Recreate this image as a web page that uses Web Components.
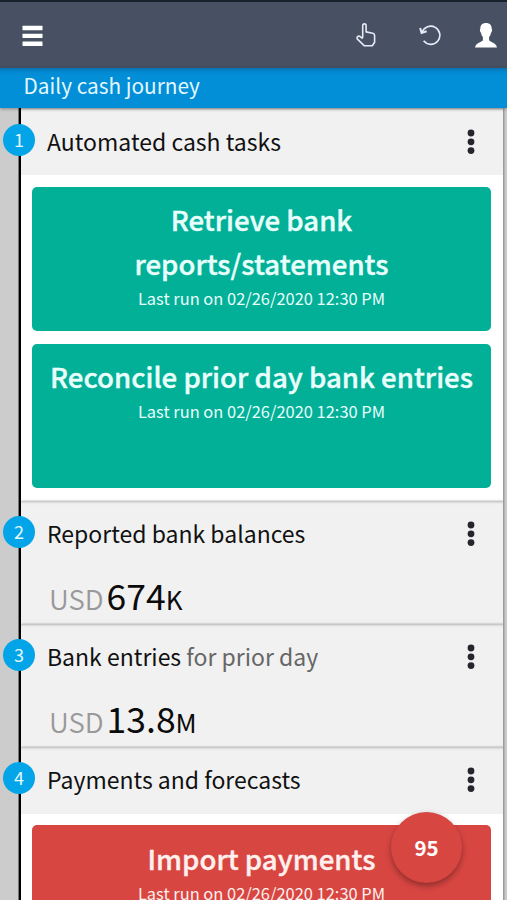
<!DOCTYPE html>
<html lang="en">
<head>
<meta charset="utf-8">
<title>Daily cash journey</title>
<style>
    html, body {
        margin: 0;
        height: 900px;
        overflow: hidden;
    }

    body {
        font-family: "Noto Sans CJK SC", "Noto Sans", sans-serif;
        background-color: #ccc;
    }
</style>
</head>
<body>
<cash-app>
    <cash-toolbar slot="toolbar"></cash-toolbar>
    <cash-title slot="title">Daily cash journey</cash-title>

    <cash-step number="1" body="tasks">
        <span slot="heading">Automated cash tasks</span>
        <cash-task color="green">
            <span>Retrieve bank reports/statements</span>
            <span slot="info">Last run on 02/26/2020 12:30 PM</span>
        </cash-task>
        <cash-task color="green">
            <span>Reconcile prior day bank entries</span>
            <span slot="info">Last run on 02/26/2020 12:30 PM</span>
        </cash-task>
    </cash-step>

    <cash-step number="2">
        <span slot="heading">Reported bank balances</span>
        <cash-amount currency="USD" unit="K">674</cash-amount>
    </cash-step>

    <cash-step number="3">
        <span slot="heading">Bank entries</span>
        <span slot="note">for prior day</span>
        <cash-amount currency="USD" unit="M">13.8</cash-amount>
    </cash-step>

    <cash-step number="4" body="tasks">
        <span slot="heading">Payments and forecasts</span>
        <cash-task color="red">
            <span>Import payments</span>
            <span slot="info">Last run on 02/26/2020 12:30 PM</span>
        </cash-task>
    </cash-step>

    <cash-fab slot="fab">95</cash-fab>
</cash-app>

<script>
class CashElement extends HTMLElement {
    constructor() {
        super()
        this.root = this.attachShadow({ mode: "open" })
    }

    connectedCallback() {
        this.root.innerHTML = this.html()
    }
}

class CashApp extends CashElement {
    html() {
        return /*html*/`
            <style>
                :host {
                    display: flex;
                    flex-direction: column;
                    position: relative;
                    height: 900px;
                    overflow: hidden;
                }

                main {
                    flex: 1;
                    min-height: 0;
                    box-sizing: border-box;
                    padding-right: 4px;
                    background: linear-gradient(to right, #ccc 18px, #777 18px, #777 19px, #000 19px, #000 21px, #ccc 21px);
                }
            </style>
            <slot name="toolbar"></slot>
            <slot name="title"></slot>
            <main><slot></slot></main>
            <slot name="fab"></slot>
        `
    }
}

class CashToolbar extends CashElement {
    html() {
        return /*html*/`
            <style>
                :host {
                    display: flex;
                    align-items: center;
                    flex: none;
                    box-sizing: border-box;
                    height: 68px;
                    padding: 0 10.5px 0 22px;
                    border-top: 2px solid #18212b;
                    background-color: #475163;
                    color: #fff;
                }

                svg {
                    display: block;
                }

                .menu {
                    margin: 2px auto 0 0;
                }

                .undo {
                    margin: 0 33.5px 0 42.5px;
                }
            </style>
            <svg class="menu" width="22" height="22" viewBox="0 0 22 22" fill="currentColor">
                <rect x=".5" y=".8" width="20" height="4.4" rx=".5"/>
                <rect x=".5" y="8.7" width="20" height="4.4" rx=".5"/>
                <rect x=".5" y="16.6" width="20" height="4.4" rx=".5"/>
            </svg>
            <svg width="22" height="26" viewBox="0 0 22 26" fill="none" stroke="#e6eaf6" stroke-width="1.6" stroke-linejoin="round">
                <path d="M7.7 15.7V3.6Q7.7 1.9 9.4 1.9Q11.1 1.9 11.1 3.6V9.9L17.8 11.3Q19.6 11.7 19.6 13.5V20.3L17.3 23.8H9.4L2.2 16.9Q1.5 15.8 2.5 14.7Q3.9 13.6 5.2 14.6L7.7 16.6"/>
            </svg>
            <svg class="undo" width="22" height="24" viewBox="0 0 23 24" fill="none" stroke="#e6eaf6" stroke-width="1.7">
                <path d="M3.3 9.2A9.5 9.5 0 1 1 4.8 18.1"/>
                <path d="M1.2 4.6L2.7 9.8L8 8.1" stroke-width="2.1"/>
            </svg>
            <svg width="22" height="26" viewBox="0 0 22 26" fill="currentColor">
                <path d="M11 1C14.7 1 16.8 3.1 16.6 6.4Q17.4 7 17 8.8Q16.8 10.3 16 10.8C15.7 13.1 14.8 14.3 14.1 15V18.3C15.6 20.5 20.8 20.6 22 25.5H0C1.2 20.6 6.4 20.5 7.9 18.3V15C7.2 14.3 6.3 13.1 6 10.8Q5.2 10.3 5 8.8Q4.6 7 5.4 6.4C5.2 3.1 7.3 1 11 1Z"/>
            </svg>
        `
    }
}

class CashTitle extends CashElement {
    html() {
        return /*html*/`
            <style>
                :host {
                    display: block;
                    flex: none;
                    position: relative;
                    z-index: 1;
                    height: 40px;
                    padding-left: 23.5px;
                    background: linear-gradient(#0a72b0, #028ad2 4px, #028fd8 8px);
                    box-shadow: 0 1px 3px rgba(0, 0, 0, .35);
                    color: #e4f8ff;
                    font-size: 20.8px;
                    line-height: 35px;
                }
            </style>
            <slot></slot>
        `
    }
}

class CashStep extends CashElement {
    html() {
        const tasks = this.getAttribute("body") === "tasks"

        return /*html*/`
            <style>
                :host {
                    display: block;
                    position: relative;
                    box-sizing: border-box;
                    margin-left: 21px;
                    height: ${ tasks ? "auto" : "123px" };
                    background-color: ${ tasks ? "#fff" : "#f1f1f1" };
                    box-shadow: 1px 0 2px rgba(0, 0, 0, .35);
                }

                header {
                    display: flex;
                    align-items: center;
                    box-sizing: border-box;
                    height: 67px;
                    padding: 0 28.5px 0 26px;
                    background: linear-gradient(#bcbcbc, #d4d4d4 1px, #e9e9e9 2px, #f1f1f1 4px);
                    color: #111;
                    font-size: 23px;
                    line-height: 36px;
                }

                .heading {
                    flex: 1;
                    margin-top: -2px;
                    white-space: nowrap;
                }

                .note {
                    color: #666;
                }

                /* sits on top of the timeline */
                .number {
                    position: absolute;
                    left: -18px;
                    top: 15.5px;
                    width: 32px;
                    height: 32px;
                    border-radius: 50%;
                    background-color: #04a5e8;
                    color: #e4f8ff;
                    font-size: 18px;
                    line-height: 31px;
                    text-align: center;
                }

                .tasks {
                    display: grid;
                    gap: 12.5px;
                    padding: 11.5px 12px 12.5px 11px;
                }
            </style>
            <header>
                <span class="number">${ this.getAttribute("number") }</span>
                <span class="heading"><slot name="heading"></slot> <span class="note"><slot name="note"></slot></span></span>
                <svg width="8" height="26" viewBox="0 0 8 26" fill="#24262b">
                    <circle cx="4" cy="4" r="3.4"/>
                    <circle cx="4" cy="12.8" r="3.4"/>
                    <circle cx="4" cy="21.6" r="3.4"/>
                </svg>
            </header>
            <div class="${ tasks ? "tasks" : "" }"><slot></slot></div>
        `
    }
}

class CashTask extends CashElement {
    html() {
        const red = this.getAttribute("color") === "red"

        return /*html*/`
            <style>
                :host {
                    display: block;
                    box-sizing: border-box;
                    height: 144.5px;
                    padding: 10.5px 10px 0;
                    border-radius: 5px;
                    background-color: ${ red ? "#d84642" : "#02af97" };
                    color: ${ red ? "#fff0ee" : "#e8fffc" };
                    text-align: center;
                }

                .name {
                    font-size: 27.6px;
                    font-weight: 500;
                    line-height: 44px;
                    max-width: 430px;
                    margin: 0 auto;
                    -webkit-text-stroke: .4px currentColor;
                }

                .info {
                    font-size: 16.45px;
                    line-height: 27px;
                }
            </style>
            <div class="name"><slot></slot></div>
            <div class="info"><slot name="info"></slot></div>
        `
    }
}

class CashAmount extends CashElement {
    html() {
        return /*html*/`
            <style>
                :host {
                    display: flex;
                    align-items: baseline;
                    padding-left: 28px;
                    color: #0b0b0b;
                    font-size: 35.5px;
                    line-height: 53px;
                }

                .currency {
                    margin-right: 3px;
                    color: #999;
                    font-size: 27.6px;
                    font-weight: 350;
                }

                .unit {
                    font-size: 26px;
                }
            </style>
            <span class="currency">${ this.getAttribute("currency") }</span>
            <slot></slot>
            <span class="unit">${ this.getAttribute("unit") }</span>
        `
    }
}

class CashFab extends CashElement {
    html() {
        return /*html*/`
            <style>
                :host {
                    position: absolute;
                    right: 45px;
                    bottom: 17px;
                    z-index: 2;
                    width: 71px;
                    height: 71px;
                    border-radius: 50%;
                    background-color: #d84642;
                    box-shadow: 0 3px 6px rgba(0, 0, 0, .35);
                    color: #fff;
                    font-size: 20.5px;
                    font-weight: 700;
                    line-height: 71px;
                    text-align: center;
                }
            </style>
            <slot></slot>
        `
    }
}

customElements.define("cash-app", CashApp)
customElements.define("cash-toolbar", CashToolbar)
customElements.define("cash-title", CashTitle)
customElements.define("cash-step", CashStep)
customElements.define("cash-task", CashTask)
customElements.define("cash-amount", CashAmount)
customElements.define("cash-fab", CashFab)
</script>
</body>
</html>
